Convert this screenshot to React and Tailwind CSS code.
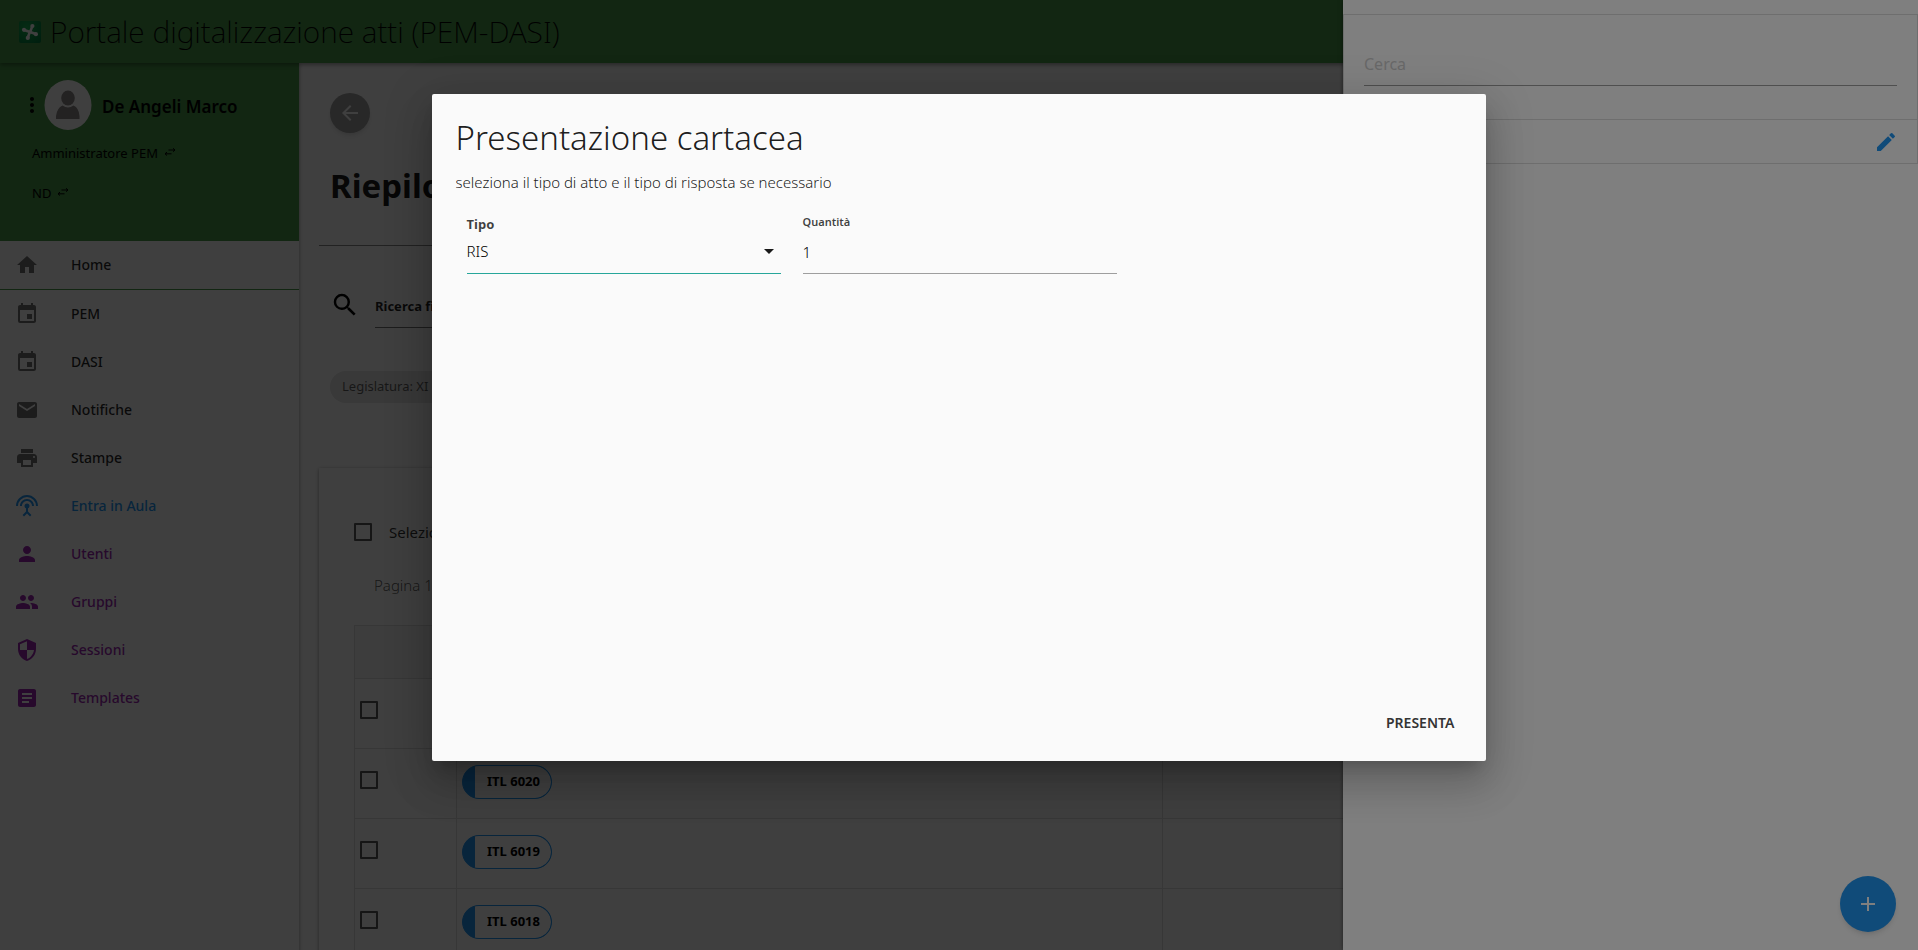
import React from "react";
import {
  MdHome,
  MdEvent,
  MdMail,
  MdPrint,
  MdSettingsInputAntenna,
  MdPerson,
  MdPeople,
  MdSecurity,
  MdArticle,
  MdArrowBack,
  MdSearch,
  MdEdit,
  MdAdd,
  MdMoreVert,
  MdArrowDropDown,
} from "react-icons/md";

const menu = [
  { label: "PEM", Icon: MdEvent, tone: "plain" },
  { label: "DASI", Icon: MdEvent, tone: "plain" },
  { label: "Notifiche", Icon: MdMail, tone: "plain" },
  { label: "Stampe", Icon: MdPrint, tone: "plain" },
  { label: "Entra in Aula", Icon: MdSettingsInputAntenna, tone: "blue" },
  { label: "Utenti", Icon: MdPerson, tone: "purple" },
  { label: "Gruppi", Icon: MdPeople, tone: "purple" },
  { label: "Sessioni", Icon: MdSecurity, tone: "purple" },
  { label: "Templates", Icon: MdArticle, tone: "purple" },
];

const iconTone = {
  plain: "text-black/55",
  blue: "text-[#2196f3]",
  purple: "text-[#9c27b0]",
};

const textTone = {
  plain: "text-black/85",
  blue: "text-[#2196f3]",
  purple: "text-[#9c27b0]",
};

const atti = ["ITL 6021", "ITL 6020", "ITL 6019", "ITL 6018"];

function Logo() {
  return (
    <svg viewBox="0 0 22 22" className="size-[22px]" aria-hidden="true">
      <defs>
        <radialGradient id="logo-fill" cx="0.35" cy="0.3" r="0.9">
          <stop offset="0" stopColor="#18b050" />
          <stop offset="1" stopColor="#007a3c" />
        </radialGradient>
      </defs>
      <rect width="22" height="22" rx="2" fill="url(#logo-fill)" />
      <g stroke="#fff" strokeWidth="2.600" strokeLinecap="round" fill="none">
        <path d="M13.200 5.200 Q12.500 8 11 11 Q9.500 14 9 16.500" />
        <path d="M5.200 9 Q8 9.800 11 11 Q14 12.200 16.800 13" />
      </g>
      <g fill="#fff">
        <circle cx="13.400" cy="5" r="2.100" />
        <circle cx="8.800" cy="16.900" r="2.100" />
        <circle cx="5" cy="8.800" r="2.100" />
        <circle cx="16.900" cy="13.200" r="2.100" />
      </g>
    </svg>
  );
}

function Avatar() {
  return (
    <svg viewBox="0 0 48 50" className="h-[50px] w-12" aria-hidden="true">
      <ellipse cx="24" cy="25" rx="23.500" ry="25" fill="#fff" />
      <ellipse cx="24" cy="18" rx="6.800" ry="7.400" fill="#8c8888" />
      <path d="M12 39 V36 Q13 28 18.500 25.500 Q24 29.500 29.500 25.500 Q35 28 35.500 36 V39 Z" fill="#8c8888" />
    </svg>
  );
}

function Swap() {
  return (
    <svg viewBox="0 0 12 8" className="h-2 w-3" aria-hidden="true">
      <path
        d="M4.500 2h6.500M9 0.300l2 1.700-2 1.700M7.500 5.800H1M3 4.100L1 5.800l2 1.700"
        stroke="#000"
        strokeWidth="1"
        fill="none"
      />
    </svg>
  );
}

function Tick({ label }) {
  return (
    <input
      type="checkbox"
      aria-label={label}
      className="block size-[18px] shrink-0 appearance-none rounded-[1px] border-2 border-[#5a5a5a]"
    />
  );
}

function Sidebar() {
  return (
    <nav className="z-10 flex w-[299px] shrink-0 flex-col bg-white shadow-[0_0_4px_rgba(0,0,0,0.4)]">
      <div className="h-[178px] bg-[#489848] pt-[17px] text-black">
        <div className="flex items-center">
          <button aria-label="Altro" className="ml-5 flex w-6 justify-center">
            <MdMoreVert size={24} />
          </button>
          <Avatar />
          <span className="ml-[10px] pt-1 text-[17px] font-semibold">De Angeli Marco</span>
        </div>
        <a href="#ruolo" className="mt-3 ml-8 flex h-6 items-center gap-[6px] text-[13px]">
          Amministratore PEM <span className="pb-1"><Swap /></span>
        </a>
        <a href="#gruppo" className="mt-4 ml-8 flex h-6 items-center gap-[6px] text-[13px]">
          ND <span className="pb-1"><Swap /></span>
        </a>
      </div>
      <a
        href="#home"
        className="flex h-[49px] items-center border-b border-[#489848] pl-[15px] text-sm font-medium text-black/85"
      >
        <MdHome size={24} className="mr-8 text-black/55" />
        Home
      </a>
      {menu.map(({ label, Icon, tone }) => (
        <a
          key={label}
          href={"#" + label}
          className={"flex h-12 items-center pl-[15px] text-sm font-medium " + textTone[tone]}
        >
          <Icon size={24} className={"mr-8 " + iconTone[tone]} />
          {label}
        </a>
      ))}
    </nav>
  );
}

function Main() {
  return (
    <main className="min-w-0 flex-1 bg-white pl-5">
      <div className="pt-[30px] pl-[11px]">
        <button
          aria-label="Indietro"
          className="flex size-10 items-center justify-center rounded-full bg-[#a0a0a0] text-white shadow-md"
        >
          <MdArrowBack size={24} />
        </button>
        <h1 className="mt-[29px] text-[33px] leading-12 font-bold text-black/90">Riepilogo</h1>
      </div>
      <hr className="mt-[35px] border-[#888]" />
      <div className="mt-9 flex h-[46px] pl-[11px]">
        <MdSearch size={30} className="mt-2" />
        <label className="ml-[15px] w-80 border-b border-[#777] pt-3 text-[13px] leading-6 font-bold text-black/85">
          Ricerca filtri
          <input className="sr-only" />
        </label>
      </div>
      <div className="mt-[43px] ml-[11px] flex h-8 w-32 items-center rounded-full bg-[#e4e4e4] pl-3 text-[13px] text-black/60">
        Legislatura: XI
      </div>
      <section className="mt-[65px] h-[500px] pl-[35px] shadow-[0_1px_4px_rgba(0,0,0,0.4)]">
        <label className="flex items-center gap-[17px] pt-[52px] text-[15px] leading-6 text-black/80">
          <Tick label="Seleziona tutti" />
          Seleziona tutti
        </label>
        <p className="mt-[29px] ml-5 text-[15px] leading-6 font-light text-black/65">Pagina 1</p>
        <table className="mt-7 w-full table-fixed border-collapse">
          <colgroup>
            <col className="w-[102px]" />
            <col className="w-[706px]" />
            <col />
          </colgroup>
          <thead>
            <tr className="h-[53px] bg-[#f4f4f4]">
              <th className="border border-[#dcdcdc]" />
              <th className="border border-[#dcdcdc]" />
              <th className="border border-[#dcdcdc]" />
            </tr>
          </thead>
          <tbody>
            {atti.map((atto) => (
              <tr key={atto} className="h-[70px]">
                <td className="border border-[#dcdcdc] px-[5px] pb-2">
                  <Tick label={atto} />
                </td>
                <td className="border border-[#dcdcdc] px-[5px] pb-1">
                  <span className="flex h-[34px] w-[90px] items-center overflow-hidden rounded-full border border-[#2196f3] bg-[#2196f3]">
                    <span className="ml-3 flex h-full flex-1 items-center rounded-l-[4px/16px] rounded-r-full bg-white pl-3 text-[13px] font-bold whitespace-nowrap text-black">
                      {atto}
                    </span>
                  </span>
                </td>
                <td className="border border-[#dcdcdc]" />
              </tr>
            ))}
          </tbody>
        </table>
      </section>
    </main>
  );
}

function SearchPanel() {
  return (
    <aside className="absolute inset-y-0 right-0 w-[575px] bg-white pt-[14px] shadow-[0_0_4px_rgba(0,0,0,0.5)]">
      <div className="border border-[#ddd]">
        <div className="h-[104px] px-5 pt-6">
          <input
            aria-label="Cerca"
            placeholder="Cerca"
            className="h-[47px] w-full border-b border-[#9e9e9e] pt-1 text-base outline-none placeholder:text-[#d1d1d1]"
          />
        </div>
        <div className="flex h-11 items-center justify-end border-t border-[#ddd] pr-[19px]">
          <button aria-label="Modifica" className="text-[#2196f3]">
            <MdEdit size={24} />
          </button>
        </div>
      </div>
      <button
        aria-label="Aggiungi"
        className="absolute right-[22px] bottom-[18px] flex size-14 items-center justify-center rounded-full bg-[#2196f3] text-white shadow-md"
      >
        <MdAdd size={24} />
      </button>
    </aside>
  );
}

function Dialog() {
  return (
    <div
      role="dialog"
      aria-modal="true"
      aria-labelledby="dialog-title"
      className="absolute inset-x-0 top-[94px] mx-auto flex min-h-[667px] w-[55%] flex-col rounded-[2px] bg-[#fafafa] p-6 pb-5 shadow-[0_24px_38px_3px_rgba(0,0,0,0.14),0_9px_46px_8px_rgba(0,0,0,0.12),0_11px_15px_-7px_rgba(0,0,0,0.2)]"
    >
      <h2 id="dialog-title" className="text-[33px] leading-10 font-light text-black/90">
        Presentazione cartacea
      </h2>
      <p className="mt-3 text-[15px] leading-6 font-light text-black/90">
        seleziona il tipo di atto e il tipo di risposta se necessario
      </p>
      <div className="mt-5 flex gap-[22px] px-[11px]">
        <div className="relative w-[314px]">
          <label htmlFor="tipo" className="block h-5 text-[13px] leading-5 font-bold text-black/75">
            Tipo
          </label>
          <select
            id="tipo"
            className="h-10 w-full appearance-none border-b border-[#26a69a] pb-1 text-[15px] font-light text-black outline-none"
          >
            <option>RIS</option>
          </select>
          <MdArrowDropDown size={24} className="pointer-events-none absolute top-[25px] right-0 text-black/90" />
        </div>
        <div className="w-[314px]">
          <label htmlFor="quantita" className="block h-5 text-[11px] leading-4 font-semibold text-black/75">
            Quantità
          </label>
          <input
            id="quantita"
            defaultValue="1"
            className="h-10 w-full border-b border-[#9e9e9e] pb-1 text-[15px] font-light text-black outline-none"
          />
        </div>
      </div>
      <button className="mt-auto h-9 self-end px-2 text-sm font-semibold text-[#343434]">PRESENTA</button>
    </div>
  );
}

export default function App() {
  return (
    <div className="relative h-screen overflow-hidden bg-white font-['Noto_Sans','Open_Sans',sans-serif]">
      <header className="relative z-20 flex h-[63px] items-center bg-[#489848] pl-[19px] shadow-[0_2px_4px_rgba(0,0,0,0.35)]">
        <Logo />
        <span className="ml-[9px] text-[30px] leading-[60px] font-extralight text-black">
          Portale digitalizzazione atti (PEM-DASI)
        </span>
      </header>
      <div className="flex min-h-full">
        <Sidebar />
        <Main />
      </div>
      <div className="absolute inset-0 z-30 bg-black/50" />
      <div className="absolute inset-0 z-40">
        <SearchPanel />
        <div className="absolute inset-0 bg-black/50" />
        <Dialog />
      </div>
    </div>
  );
}
